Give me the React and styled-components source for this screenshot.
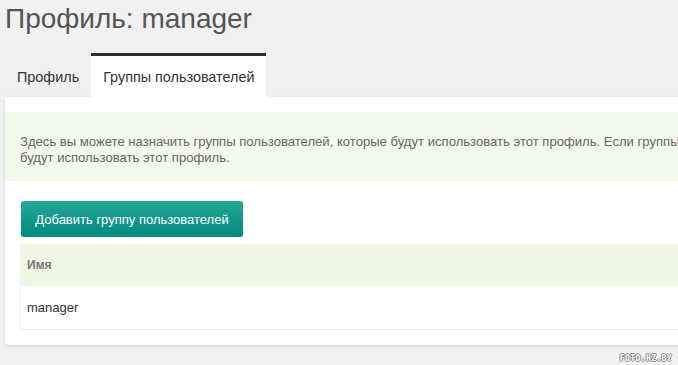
import styled, { createGlobalStyle } from 'styled-components';

const Global = createGlobalStyle`
  html, body {
    margin: 0;
    padding: 0;
    background: #f1f1f1;
    font-family: "Liberation Sans", Arial, sans-serif;
    overflow: hidden;
  }
`

const Page = styled.div`
  width: 678px;
  height: 365px;
  padding-left: 5px;
  box-sizing: border-box;
  position: relative;
  overflow: hidden;
`

const Title = styled.h1`
  margin: 0;
  padding-top: 4px;
  height: 49px;
  font-size: 28px;
  font-weight: normal;
  color: #555;
  line-height: 30px;
`

const Tabs = styled.div`
  display: flex;
  height: 44px;
`

const Tab = styled.div`
  padding: 1px 12px 0;
  height: 44px;
  box-sizing: border-box;
  display: flex;
  align-items: center;
  font-size: 14.4px;
  color: #333;
  border-top: 3px solid ${props => props.$active ? "#2d2d2d" : "transparent"};
  background: ${props => props.$active ? "#fff" : "transparent"};
`

const Panel = styled.div`
  background: #fff;
  width: 700px;
  height: 248px;
  padding-top: 15px;
  box-sizing: border-box;
  box-shadow: 0 1px 3px rgba(0, 0, 0, 0.12);
  border-radius: 0 0 0 3px;
`

const Info = styled.div`
  background: #f3faeb;
  height: 69px;
  padding: 22px 15px 0;
  box-sizing: border-box;
  font-size: 13.1px;
  line-height: 16px;
  color: #666;
  white-space: nowrap;
`

const Body = styled.div`
  padding: 20px 0 0 15px;
`

const Button = styled.button`
  display: block;
  height: 36px;
  width: 222px;
  border: none;
  border-radius: 3px;
  background: linear-gradient(to bottom, #26a598, #008b7e);
  color: #fff;
  font-family: "Liberation Sans", Arial, sans-serif;
  font-size: 13px;
  padding: 0;
  margin-left: 1px;
`

const Table = styled.div`
  margin-top: 7px;
  border-left: 1px solid #eef2e8;
  border-bottom: 1px solid #ececec;
`

const HeadRow = styled.div`
  background: #eff6e1;
  height: 42px;
  display: flex;
  align-items: center;
  padding-left: 6px;
  font-size: 12px;
  font-weight: bold;
  color: #777;
`

const Row = styled.div`
  height: 43px;
  display: flex;
  align-items: center;
  padding-left: 6px;
  font-size: 13px;
  color: #333;
`

const Watermark = styled.div`
  position: absolute;
  right: 6px;
  bottom: 2px;
  font-family: "DejaVu Sans Mono", monospace;
  font-size: 8px;
  font-weight: bold;
  letter-spacing: 0.4px;
  color: #fff;
  text-shadow: 1px 0 #888, -1px 0 #888, 0 1px #888, 0 -1px #888;
`

export default function App() {
  return (
    <>
      <Global />
      <Page>
        <Title>Профиль: manager</Title>
        <Tabs>
          <Tab>Профиль</Tab>
          <Tab $active>Группы пользователей</Tab>
        </Tabs>
        <Panel>
          <Info>
            Здесь вы можете назначить группы пользователей, которые будут использовать этот профиль. Если группы не выбраны, все пользователи<br />
            будут использовать этот профиль.
          </Info>
          <Body>
            <Button>Добавить группу пользователей</Button>
            <Table>
              <HeadRow>Имя</HeadRow>
              <Row>manager</Row>
            </Table>
          </Body>
        </Panel>
        <Watermark>FOTO.HZ.BY</Watermark>
      </Page>
    </>
  )
}
